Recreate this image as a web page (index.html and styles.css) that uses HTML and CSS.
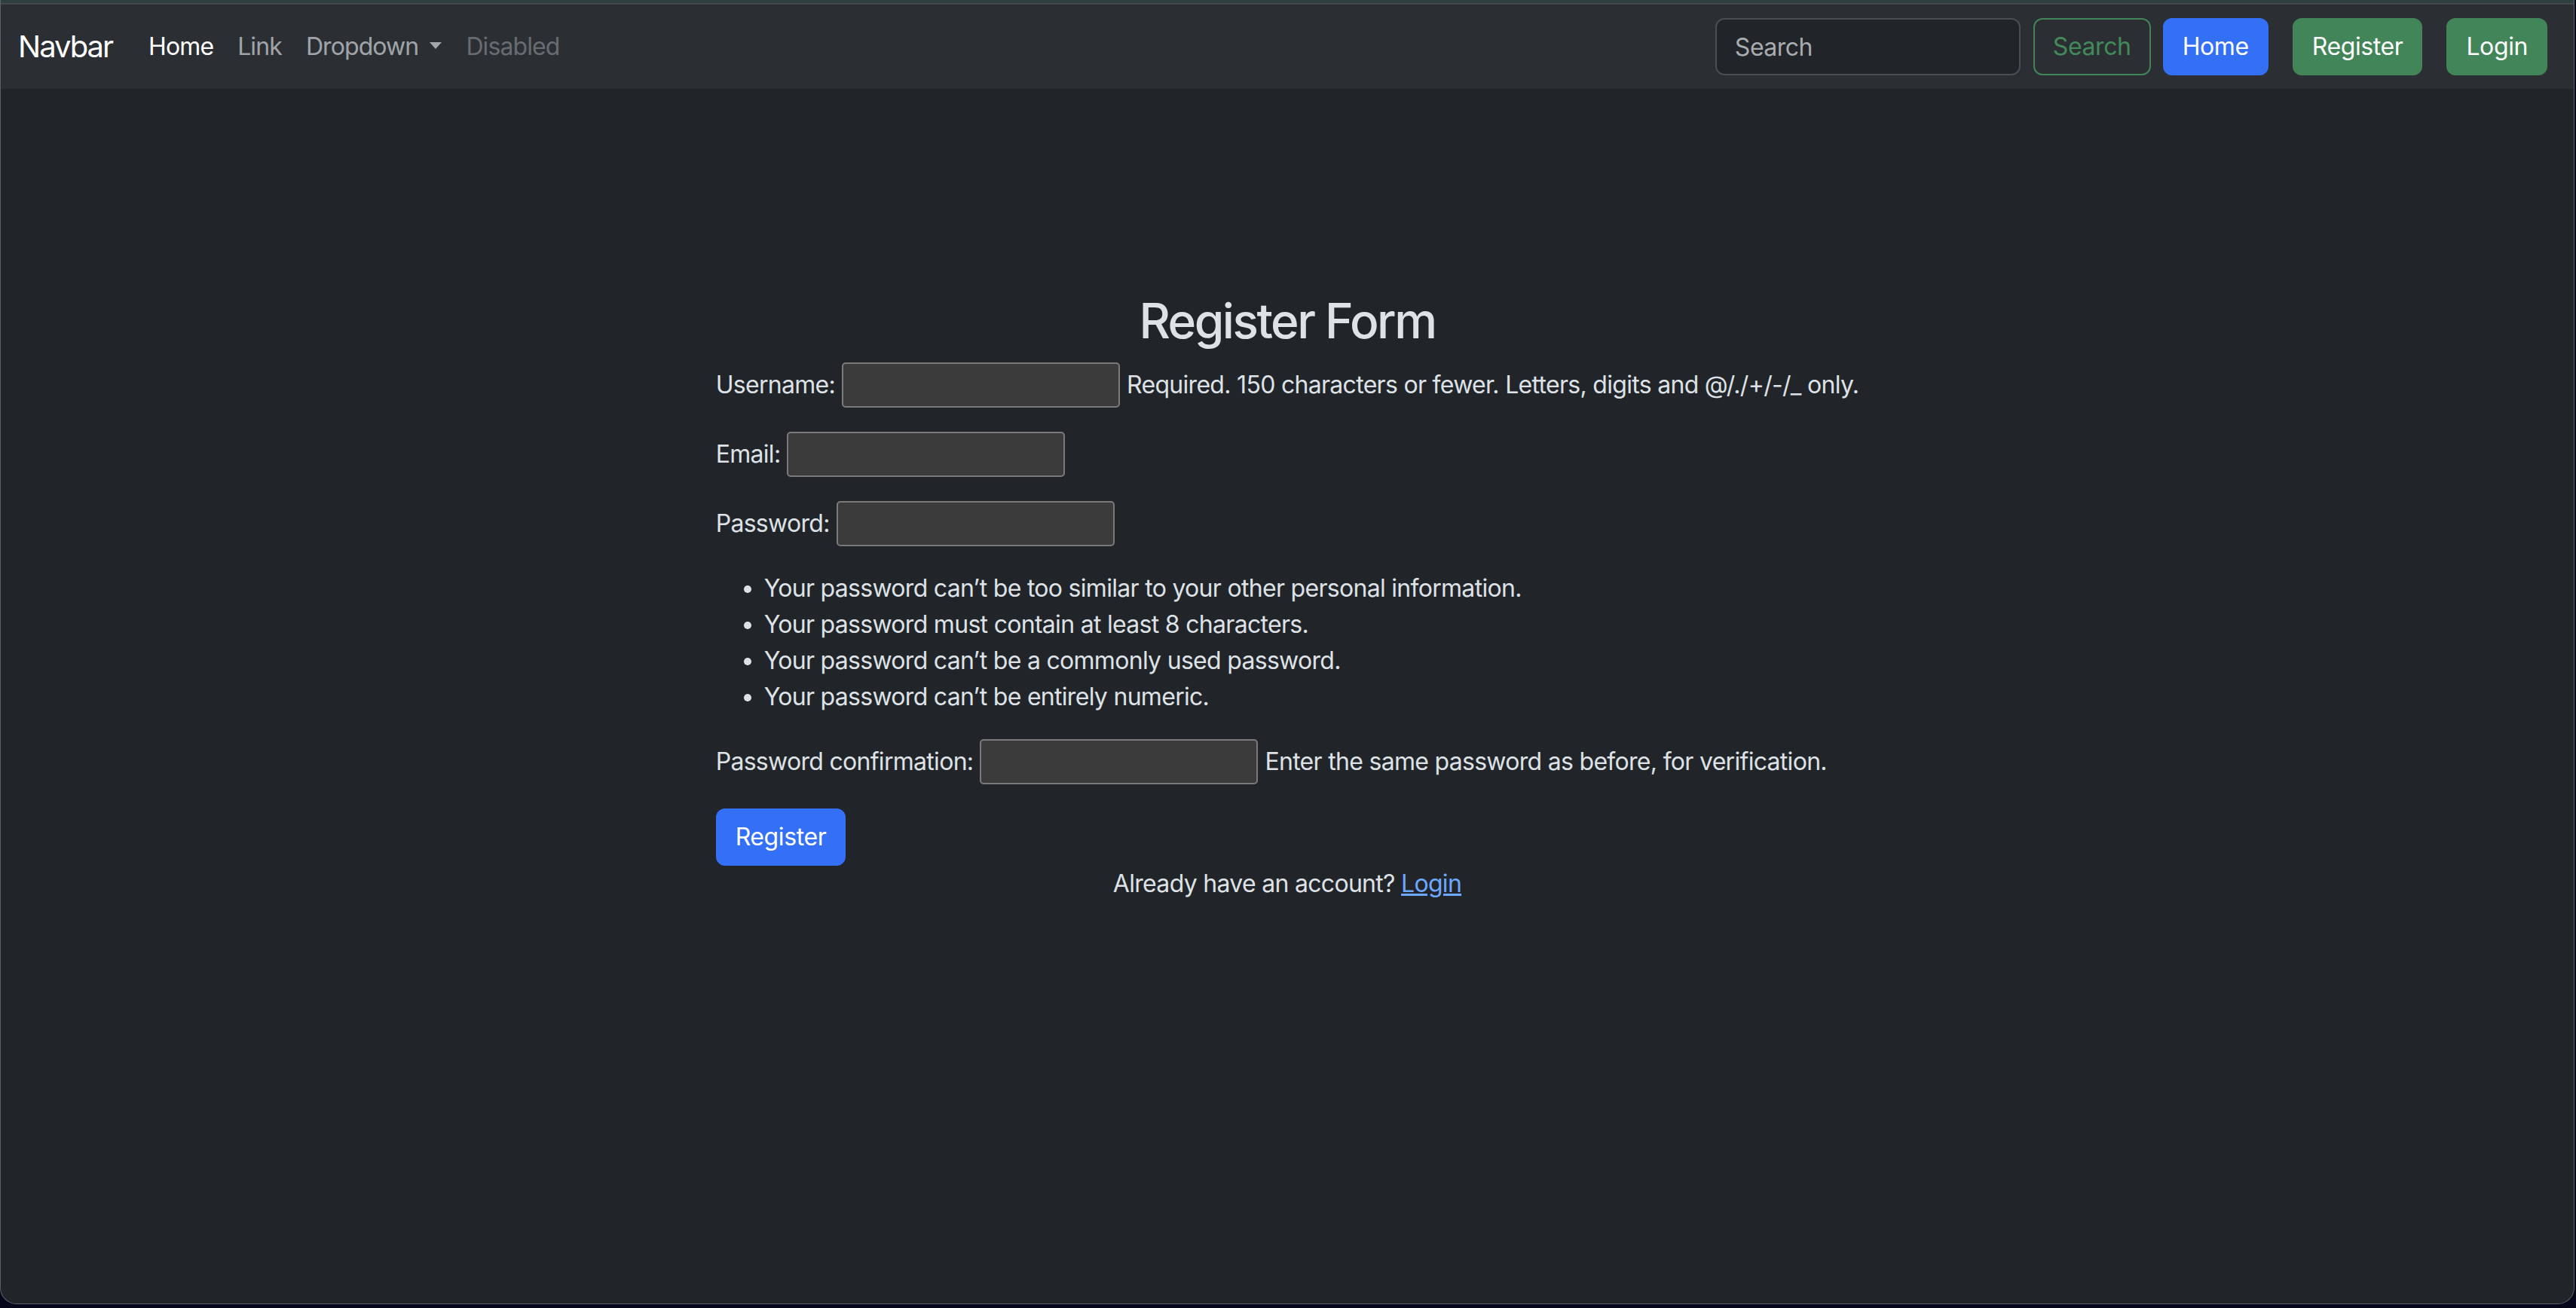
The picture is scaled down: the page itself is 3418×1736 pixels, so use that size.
FILE: index.html
```html
<!DOCTYPE html>
<html lang="en">
<head>
<meta charset="utf-8">
<title>Register</title>
<link rel="stylesheet" href="styles.css">
</head>
<body>
<div class="window">
  <div class="chrome-top"></div>
  <nav class="navbar">
    <a class="brand" href="#">Navbar</a>
    <ul class="nav">
      <li><a class="nav-link active" href="#">Home</a></li>
      <li><a class="nav-link" href="#">Link</a></li>
      <li><a class="nav-link dropdown" href="#">Dropdown</a></li>
      <li><a class="nav-link disabled" href="#">Disabled</a></li>
    </ul>
    <div class="nav-right">
      <form class="search">
        <input class="search-input" type="search" placeholder="Search">
        <button class="btn btn-outline" type="button">Search</button>
      </form>
      <a class="btn btn-primary btn-home" href="#">Home</a>
      <a class="btn btn-success btn-gap" href="#">Register</a>
      <a class="btn btn-success btn-gap" href="#">Login</a>
    </div>
  </nav>
  <main class="main">
    <h2 class="title">Register Form</h2>
    <form class="register">
      <div class="row">
        <label class="label">Username:</label>
        <input class="field" type="text">
        <span class="help">Required. 150 characters or fewer. Letters, digits and @/./+/-/_ only.</span>
      </div>
      <div class="row">
        <label class="label">Email:</label>
        <input class="field" type="email">
      </div>
      <div class="row">
        <label class="label">Password:</label>
        <input class="field" type="password">
      </div>
      <ul class="rules">
        <li>Your password can’t be too similar to your other personal information.</li>
        <li>Your password must contain at least 8 characters.</li>
        <li>Your password can’t be a commonly used password.</li>
        <li>Your password can’t be entirely numeric.</li>
      </ul>
      <div class="row">
        <label class="label">Password confirmation:</label>
        <input class="field" type="password">
        <span class="help">Enter the same password as before, for verification.</span>
      </div>
      <button class="btn btn-primary" type="button">Register</button>
    </form>
    <p class="already">Already have an account? <a class="link" href="#">Login</a></p>
  </main>
</div>
</body>
</html>
```

FILE: styles.css
```css
* { box-sizing: border-box; }

html, body {
  margin: 0;
  padding: 0;
}

body {
  background: #07071b;
  font-family: Inter, "Liberation Sans", sans-serif;
  font-size: 32px;
  line-height: 48px;
  color: #dee2e6;
  width: 3418px;
  height: 1736px;
  overflow: hidden;
}

.window {
  width: 3416px;
  height: 1731px;
  background: #212529;
  border: 1px solid #5e6064;
  border-top: none;
  border-radius: 0 0 22px 22px;
  overflow: hidden;
  display: flex;
  flex-direction: column;
}

.chrome-top {
  height: 6px;
  background: #2d403d;
  border-bottom: 2px solid #44474a;
}

.navbar {
  height: 112px;
  background: #2b2e33;
  display: flex;
  align-items: center;
  padding: 0 35px 0 23px;
}

.brand {
  font-size: 40px;
  line-height: 60px;
  color: #ffffff;
  text-decoration: none;
  margin-right: 32px;
  letter-spacing: -2px;
}

.nav {
  list-style: none;
  margin: 0;
  padding: 0;
  display: flex;
}

.nav-link {
  display: block;
  padding: 0 16px;
  color: rgba(222, 226, 230, 0.68);
  text-decoration: none;
  letter-spacing: -0.9px;
}

.nav-link.active { color: #ffffff; }
.nav-link.disabled { color: rgba(222, 226, 230, 0.36); }

.dropdown::after {
  content: "";
  display: inline-block;
  margin-left: 15px;
  vertical-align: 8px;
  border-top: 9px solid;
  border-left: 8px solid transparent;
  border-right: 8px solid transparent;
}

.nav-right {
  margin-left: auto;
  display: flex;
  align-items: center;
}

.search {
  display: flex;
  align-items: center;
  margin: 0;
}

.search-input {
  width: 405px;
  height: 76px;
  margin-right: 17px;
  padding: 0 24px;
  background: #212529;
  border: 2px solid #4a4e53;
  border-radius: 12px;
  color: #dee2e6;
  font-family: inherit;
  font-size: 32px;
  letter-spacing: -0.5px;
  outline: none;
  -webkit-appearance: none;
  appearance: none;
}

.search-input::placeholder { color: #a9acaf; }

.btn {
  display: inline-flex;
  align-items: center;
  justify-content: center;
  height: 76px;
  padding: 0 24px;
  border-radius: 12px;
  border: 2px solid transparent;
  font-family: inherit;
  font-size: 32px;
  line-height: 48px;
  text-decoration: none;
  cursor: pointer;
  letter-spacing: -0.4px;
}

.btn-outline {
  background: transparent;
  border-color: #428558;
  color: #428a5a;
}

.btn-primary {
  background: #3470f5;
  border-color: #3470f5;
  color: #ffffff;
}

.btn-success {
  background: #428558;
  border-color: #428558;
  color: #ffffff;
}

.btn-home { margin-left: 16px; }
.btn-gap { margin-left: 32px; }

.main {
  flex: 1;
  display: flex;
  flex-direction: column;
  align-items: center;
  padding-top: 270px;
}

.title {
  margin: 0 0 16px;
  font-size: 64px;
  line-height: 1.2;
  font-weight: 500;
  color: #dee2e6;
  letter-spacing: -2.5px;
}

.register {
  margin: 0;
  display: flex;
  flex-direction: column;
  align-items: flex-start;
}

.row {
  display: flex;
  align-items: center;
  gap: 9px;
  height: 60px;
  margin-bottom: 32px;
  white-space: nowrap;
  letter-spacing: -0.7px;
}

.field {
  width: 369px;
  height: 60px;
  padding: 0;
  background: #3b3b3b;
  border: 2px solid #7a7a7a;
  border-radius: 5px;
  outline: none;
  -webkit-appearance: none;
  appearance: none;
}

.rules {
  margin: 0 0 32px;
  padding-left: 64px;
  letter-spacing: -0.7px;
}

.already {
  margin: 0;
  letter-spacing: -0.7px;
}

.link {
  color: #6ea8fe;
  text-decoration: underline;
}
```
